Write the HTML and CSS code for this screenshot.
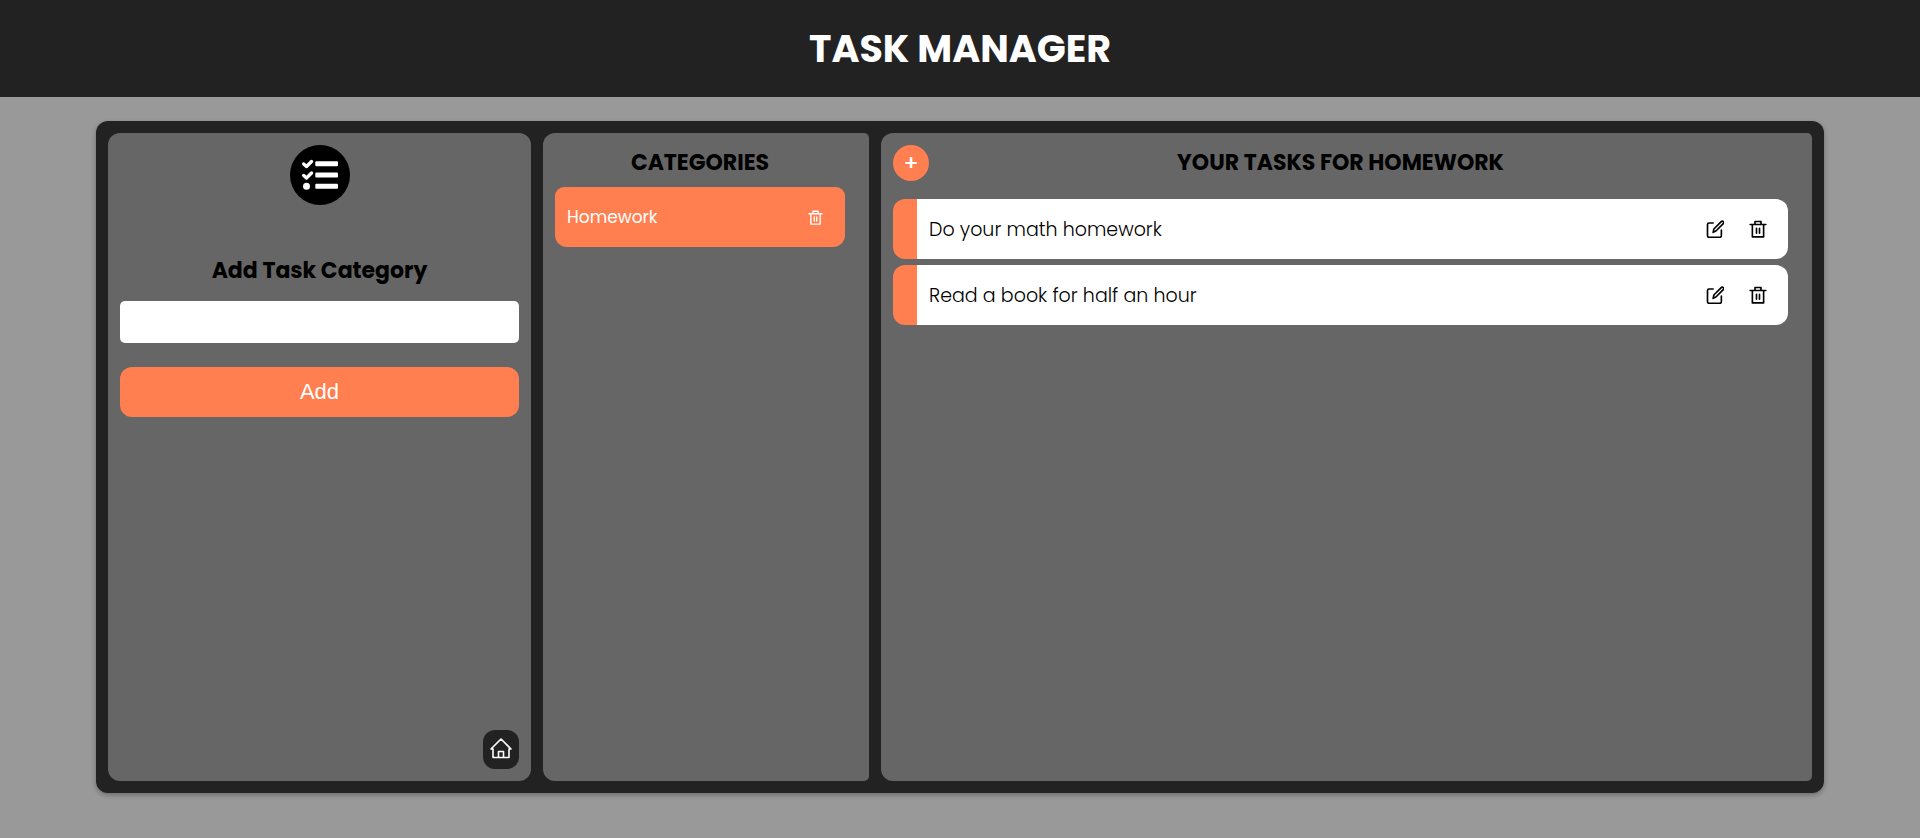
FILE: index.html
```html
<!DOCTYPE html>
<html lang="en">
<head>
  <meta charset="utf-8">
  <meta name="viewport" content="width=device-width, initial-scale=1">
  <title>Task Manager</title>
  <link rel="stylesheet" href="styles.css">
</head>
<body>
  <svg class="sprite" aria-hidden="true">
    <symbol id="trash" viewBox="0 0 24 24">
      <path d="M1.500 6h21M4.500 6v16.500h15V6M8 6V2h8v4M10 11v6.500M14 11v6.500" fill="none" stroke="currentColor" stroke-width="2.200" stroke-linecap="round" stroke-linejoin="round"/>
    </symbol>
    <symbol id="edit" viewBox="0 0 24 24">
      <path d="M9.500 4H4a2 2 0 0 0-2 2v15a2 2 0 0 0 2 2h14.500a2 2 0 0 0 2-2v-7.500M9.500 16.500l1-4.500L20.300 2.100a1.900 1.900 0 0 1 2.700 2.700L13.200 14.700z" fill="none" stroke="currentColor" stroke-width="2.200" stroke-linecap="round" stroke-linejoin="round"/>
    </symbol>
  </svg>

  <header class="header">
    <h1 class="header-title">TASK MANAGER</h1>
  </header>

  <main class="board">
    <section class="panel sidebar">
      <svg class="logo" viewBox="0 0 60 60" aria-hidden="true">
        <circle cx="30" cy="30" r="30"/>
        <g fill="none" stroke="#fff" stroke-width="3.400" stroke-linecap="round" stroke-linejoin="round">
          <path d="M13.700 19l2.800 2.500 5-5M13.700 30.500l2.800 2.500 5-5"/>
        </g>
        <g fill="#fff">
          <circle cx="16.500" cy="41.300" r="3.500"/>
          <rect x="25.300" y="16.300" width="22.700" height="5" rx="1"/>
          <rect x="25.300" y="27.500" width="22.700" height="5" rx="1"/>
          <rect x="25.300" y="38.800" width="22.700" height="5" rx="1"/>
        </g>
      </svg>
      <form class="category-form">
        <label class="heading" for="category">Add Task Category</label>
        <input class="category-input" id="category" type="text">
        <button class="add-button" type="button">Add</button>
      </form>
      <a class="home" href="#" aria-label="Home">
        <svg class="home-icon" viewBox="0 0 22 22" aria-hidden="true">
          <path d="M1 11L11 1l10 10h-2v8.500H3V11zM8.500 19.500v-6h5v6" fill="none" stroke="currentColor" stroke-width="1.600" stroke-linejoin="round"/>
        </svg>
      </a>
    </section>

    <section class="panel list-panel">
      <h2 class="heading list-heading">CATEGORIES</h2>
      <div class="category">
        <span>Homework</span>
        <button class="icon-button" type="button" aria-label="Delete category"><svg class="icon-small"><use href="#trash"/></svg></button>
      </div>
    </section>

    <section class="panel list-panel">
      <div class="tasks-header">
        <button class="plus" type="button" aria-label="Add task">+</button>
        <h2 class="heading">YOUR TASKS FOR HOMEWORK</h2>
      </div>
      <ul class="tasks">
        <li class="task">
          <span class="task-name">Do your math homework</span>
          <button class="icon-button" type="button" aria-label="Edit task"><svg class="icon"><use href="#edit"/></svg></button>
          <button class="icon-button" type="button" aria-label="Delete task"><svg class="icon"><use href="#trash"/></svg></button>
        </li>
        <li class="task">
          <span class="task-name">Read a book for half an hour</span>
          <button class="icon-button" type="button" aria-label="Edit task"><svg class="icon"><use href="#edit"/></svg></button>
          <button class="icon-button" type="button" aria-label="Delete task"><svg class="icon"><use href="#trash"/></svg></button>
        </li>
      </ul>
    </section>
  </main>
</body>
</html>
```
FILE: styles.css
```css
* {
  box-sizing: border-box;
  margin: 0;
  padding: 0;
}

body {
  display: flex;
  flex-direction: column;
  min-height: 100vh;
  background: #999;
  color: #000;
  font-family: Poppins, Inter, sans-serif;
}

button {
  border: 0;
  color: inherit;
  font: inherit;
  cursor: pointer;
}

.sprite {
  display: none;
}

.header {
  padding: 20px;
  background: #222;
  text-align: center;
}

.header-title {
  color: #fff;
  font-size: 38px;
  line-height: 57px;
  font-weight: 700;
}

.board {
  flex: 1;
  display: grid;
  grid-template-columns: 423fr 326fr 931fr;
  gap: 12px;
  width: 90%;
  margin: 24px auto 45px;
  padding: 12px;
  border-radius: 12px;
  background: #222;
  box-shadow: 0 2px 5px rgba(0, 0, 0, 0.3);
}

.panel {
  padding: 12px;
  border-radius: 12px;
  background: #666;
}

.list-panel {
  padding-right: 24px;
  border-radius: 12px 5px 5px 12px;
}

.heading {
  font-size: 22px;
  line-height: 36px;
  font-weight: 700;
  text-align: center;
}

.sidebar {
  display: flex;
  flex-direction: column;
  align-items: center;
}

.logo {
  width: 60px;
  height: 60px;
}

.category-form {
  display: flex;
  flex-direction: column;
  width: 100%;
  margin-top: 48px;
}

.category-input {
  height: 42px;
  margin: 12px 0 24px;
  padding: 0 12px;
  border: 0;
  border-radius: 5px;
  background: #fff;
  font-size: 19px;
}

.add-button {
  height: 50px;
  border-radius: 12px;
  background: #ff7f50;
  color: #fff;
  font-family: "Liberation Sans", Arial, sans-serif;
  font-size: 22px;
}

.home {
  display: flex;
  justify-content: center;
  width: 36px;
  height: 39px;
  margin-top: auto;
  margin-left: auto;
  padding-top: 8px;
  border-radius: 12px;
  background: #222;
  color: #fff;
}

.home-icon {
  width: 22px;
  height: 22px;
}

.list-heading {
  margin-bottom: 6px;
}

.category {
  display: flex;
  align-items: center;
  justify-content: space-between;
  height: 60px;
  padding: 0 22px 0 12px;
  border-radius: 9px 9px 12px 12px;
  background: #ff7f50;
  color: #fff;
  font-size: 17px;
}

.icon-button {
  display: flex;
  background: none;
}

.icon-small {
  width: 15px;
  height: 15px;
}

.icon {
  width: 18px;
  height: 18px;
}

.tasks-header {
  display: grid;
  align-items: center;
  margin-bottom: 18px;
}

.tasks-header > * {
  grid-area: 1 / 1;
}

.plus {
  width: 36px;
  height: 36px;
  border-radius: 50%;
  background: #ff7f50;
  color: #fff;
  font-size: 22px;
  line-height: 34px;
  font-weight: 500;
}

.tasks {
  display: grid;
  gap: 6px;
  list-style: none;
}

.task {
  display: flex;
  align-items: center;
  gap: 25px;
  height: 60px;
  padding: 0 21px 0 12px;
  border-left: 24px solid #ff7f50;
  border-radius: 12px;
  background: #fff;
}

.task-name {
  flex: 1;
  font-size: 19px;
  font-weight: 300;
}
```
